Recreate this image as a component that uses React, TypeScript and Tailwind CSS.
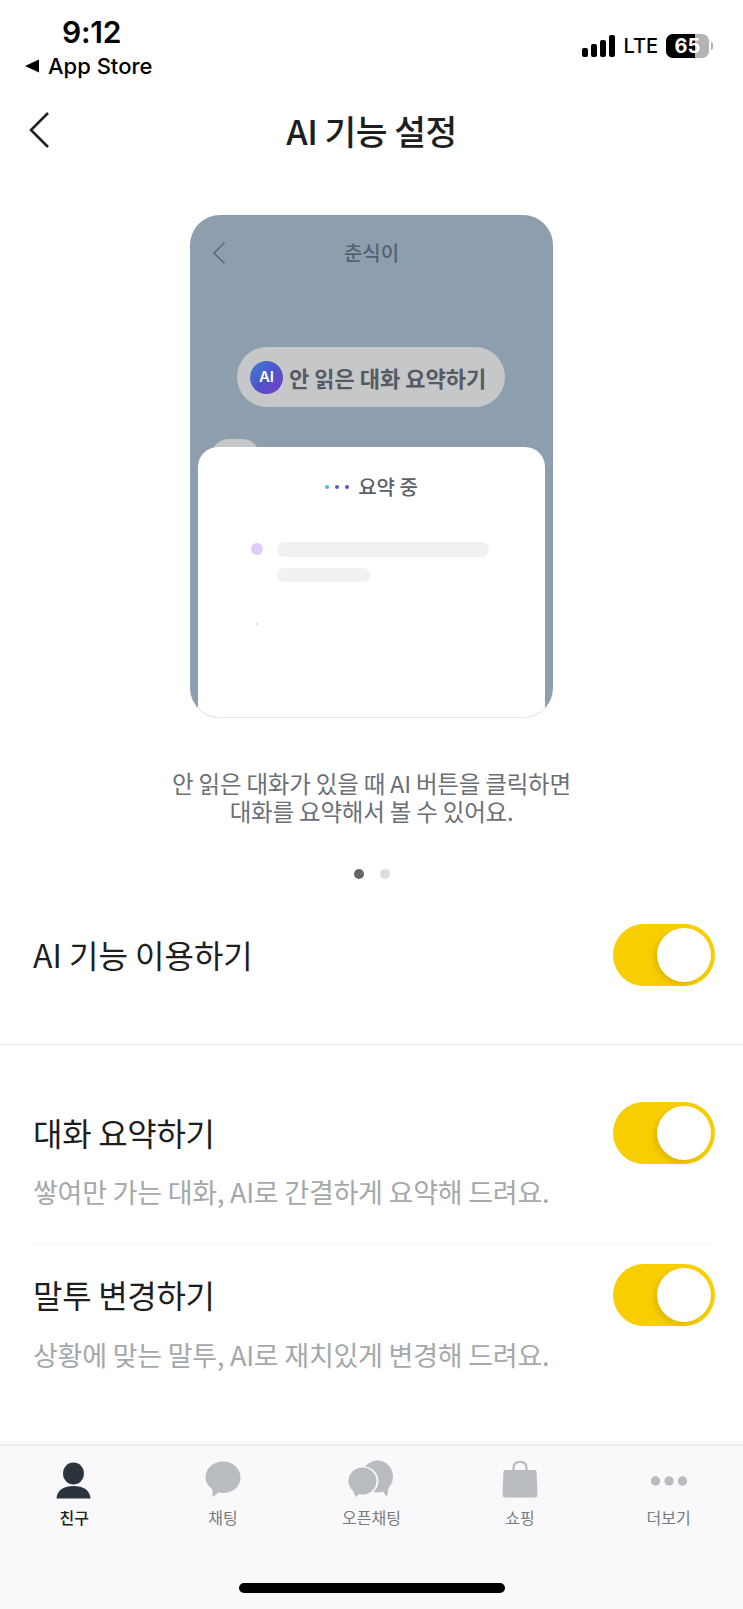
import React from 'react';

const cjk = "font-['Noto_Sans_CJK_KR','Noto_Sans',sans-serif]";

const Toggle: React.FC = () => (
  <div className="flex h-[62px] w-[102px] items-center justify-end rounded-full bg-[#f9ce00] pr-[4px]">
    <div className="h-[54px] w-[54px] rounded-full bg-white shadow-[-3px_3px_5px_rgba(150,120,0,0.25)]" />
  </div>
);

const FriendIcon = () => (
  <svg width="46" height="40" viewBox="0 0 46 40">
    <ellipse cx="22.5" cy="14.5" rx="10.5" ry="11" fill="#2b333d" />
    <path d="M5.500 39.500 C6 31 13 27 22.500 27 C32 27 39 31 39.500 39.500 Z" fill="#2b333d" />
  </svg>
);

const ChatIcon = () => (
  <svg width="46" height="40" viewBox="0 0 46 40">
    <path
      d="M23 2.500 C33 2.500 40.500 9.500 40.500 18.500 C40.500 27.500 33 34 23 34 C21.500 34 20 33.800 18.800 33.500 L12.500 38 L12.300 30 C8 27 5.500 23 5.500 18.500 C5.500 9.500 13 2.500 23 2.500 Z"
      fill="#b8bcbf"
    />
  </svg>
);

const OpenChatIcon = () => (
  <svg width="46" height="40" viewBox="0 0 46 40">
    <ellipse cx="29.500" cy="17.500" rx="15.500" ry="16" fill="#b8bcbf" />
    <path d="M33 30 L39 38 L41 26 Z" fill="#b8bcbf" />
    <ellipse cx="15" cy="22" rx="15.500" ry="14.500" fill="#f9f9fb" />
    <path d="M3 31 L7 40 L16 33 Z" fill="#f9f9fb" />
    <ellipse cx="14.500" cy="22" rx="14" ry="13.500" fill="#b8bcbf" />
    <path d="M4.500 30 L7.500 38 L14 33 Z" fill="#b8bcbf" />
  </svg>
);

const BagIcon = () => (
  <svg width="46" height="40" viewBox="0 0 46 40">
    <path d="M16.500 11 V9 C16.500 5 19 2.800 23 2.800 C27 2.800 29.500 5 29.500 9 V11" fill="none" stroke="#b8bcbf" strokeWidth="2.200" />
    <path d="M8 11 H38 C39 11 39.500 11.500 39.500 12.500 L40.500 36 C40.500 37.500 39.500 38.500 38 38.500 H8 C6.500 38.500 5.500 37.500 5.500 36 L6.500 12.500 C6.500 11.500 7 11 8 11 Z" fill="#b8bcbf" />
  </svg>
);

const MoreIcon = () => (
  <svg width="46" height="40" viewBox="0 0 46 40">
    <circle cx="9.500" cy="22" r="4.700" fill="#b8bcbf" />
    <circle cx="23" cy="22" r="4.700" fill="#b8bcbf" />
    <circle cx="36.500" cy="22" r="4.700" fill="#b8bcbf" />
  </svg>
);

const tabs = [
  { label: '친구', icon: <FriendIcon />, active: true },
  { label: '채팅', icon: <ChatIcon />, active: false },
  { label: '오픈채팅', icon: <OpenChatIcon />, active: false },
  { label: '쇼핑', icon: <BagIcon />, active: false },
  { label: '더보기', icon: <MoreIcon />, active: false },
];

const StatusBar = () => (
  <div className="flex h-[94px] items-start justify-between pl-[25px] pr-[30px]">
    <div className="flex flex-col font-['Inter',sans-serif] text-black">
      <div className="mt-[16px] ml-[37px] text-[30px] leading-[32px] font-semibold tracking-[-0.2px]">9:12</div>
      <div className="mt-[4px] flex items-center gap-[9px]">
        <svg width="14" height="14" viewBox="0 0 14 14">
          <path d="M0 7 L14 0.500 V13.500 Z" fill="#000" />
        </svg>
        <span className="text-[22px] leading-[28px] font-medium">App Store</span>
      </div>
    </div>
    <div className="mt-[34px] flex items-center font-['Inter',sans-serif] text-black">
      <div className="flex items-end gap-[3px]">
        <div className="h-[9px] w-[6px] rounded-[2px] bg-black" />
        <div className="h-[13px] w-[6px] rounded-[2px] bg-black" />
        <div className="h-[17px] w-[6px] rounded-[2px] bg-black" />
        <div className="h-[22px] w-[6px] rounded-[2px] bg-black" />
      </div>
      <span className="ml-[8px] text-[20px] leading-[24px] font-medium">LTE</span>
      <div className="relative ml-[8px] flex h-[24px] w-[43px] overflow-hidden rounded-[7px] bg-[#b4b4b4]">
        <div className="h-full w-[29px] bg-black" />
        <span className="absolute inset-0 text-center text-[20px] leading-[24px] font-bold text-white">65</span>
      </div>
      <div className="ml-[2px] h-[8px] w-[2px] rounded-r-full bg-[#b4b4b4]" />
    </div>
  </div>
);

const Header = () => (
  <div className="relative flex h-[72px] items-center justify-center">
    <svg className="absolute left-[28px] top-[17px]" width="24" height="38" viewBox="0 0 24 38">
      <path d="M20 2 L3 19 L20 36" fill="none" stroke="#222" strokeWidth="2.600" />
    </svg>
    <h1 className={`${cjk} text-[34.500px] leading-[44px] font-medium tracking-[-0.5px] text-[#1e1e1e]`}>AI 기능 설정</h1>
  </div>
);

const PreviewCard = () => (
  <div className={`${cjk} relative mx-auto mt-[49px] h-[503px] w-[363px] overflow-hidden rounded-[30px] bg-[#8d9fae]`}>
    <div className="relative flex h-[76px] items-center justify-center">
      <svg className="absolute left-[22px] top-[26px]" width="14" height="24" viewBox="0 0 14 24">
        <path d="M12.500 1.500 L2 12 L12.500 22.500" fill="none" stroke="#5c6875" strokeWidth="1.500" />
      </svg>
      <span className="text-[20px] leading-[28px] font-medium text-[#56626e]">춘식이</span>
    </div>
    <div className="mt-[56px] ml-[47px] flex h-[60px] w-[268px] items-center rounded-full bg-[#c6c7c9] pl-[13px]">
      <div className="flex h-[33px] w-[33px] items-center justify-center rounded-full bg-gradient-to-br from-[#3f7fd8] via-[#4a55c8] to-[#7a35c8] font-['Inter',sans-serif] text-[15px] font-semibold text-white">
        AI
      </div>
      <span className="ml-[6px] text-[22px] leading-[30px] font-semibold whitespace-nowrap text-[#555b63]">
        안 읽은 대화 요약하기
      </span>
    </div>
    <div className="mt-[32px] ml-[21px] h-[40px] w-[49px] rounded-[18px] bg-[#c6c7c9]" />

    {/* white sheet laid over the chat */}
    <div className="absolute inset-x-[8px] top-[232px] bottom-0 rounded-t-[20px] bg-white">
      <div className="mt-[26px] flex h-[28px] items-center justify-center">
        <div className="flex items-center gap-[6px]">
          <div className="h-[4px] w-[4px] rounded-full bg-[#55b8ee]" />
          <div className="h-[4px] w-[4px] rounded-full bg-[#4a5fd0]" />
          <div className="h-[4px] w-[4px] rounded-full bg-[#7a3fc8]" />
        </div>
        <span className="ml-[9px] text-[20px] leading-[28px] font-medium text-[#5a6068]">요약 중</span>
      </div>
      <div className="mt-[41px] flex pl-[53px]">
        <div className="mt-[1px] h-[12px] w-[12px] rounded-full bg-[#e0ccfb]" />
        <div className="ml-[14px] flex flex-col gap-[11px]">
          <div className="h-[15px] w-[212px] rounded-full bg-[#f1f1f1]" />
          <div className="h-[14px] w-[93px] rounded-full bg-[#f1f1f1]" />
        </div>
      </div>
      <div className="mt-[41px] ml-[58px] h-[2px] w-[2px] rounded-full bg-[#d8d8d8]" />
    </div>
    <div className="pointer-events-none absolute inset-0 rounded-[30px] border-b border-[#e3e5e7]" />
  </div>
);

export default function App() {
  return (
    <div className={`${cjk} flex h-[1609px] w-full flex-col overflow-hidden bg-white`}>
      <StatusBar />
      <Header />
      <PreviewCard />

      <p className="mt-[51px] text-center text-[23.500px] leading-[28px] tracking-[-0.2px] text-[#6b6f75]">
        안 읽은 대화가 있을 때 AI 버튼을 클릭하면
        <br />
        대화를 요약해서 볼 수 있어요.
      </p>

      <div className="mt-[44px] flex justify-center gap-[16px]">
        <div className="h-[10px] w-[10px] rounded-full bg-[#666666]" />
        <div className="h-[10px] w-[10px] rounded-full bg-[#dddddd]" />
      </div>

      <div className="mt-[45px] flex h-[62px] items-center justify-between pl-[33px] pr-[28px]">
        <span className="pb-[2px] text-[32px] leading-[42px] text-[#1e1e1e]">AI 기능 이용하기</span>
        <Toggle />
      </div>

      <div className="mt-[58px] h-px bg-[#ebebeb]" />

      <div className="mt-[57px] flex h-[62px] items-center justify-between pl-[33px] pr-[28px]">
        <span className="pb-[3px] text-[32px] leading-[42px] tracking-[-0.3px] text-[#1e1e1e]">대화 요약하기</span>
        <Toggle />
      </div>
      <p className="mt-[11px] pl-[33px] text-[27px] leading-[34px] tracking-[-0.23px] text-[#a5a8ab]">
        쌓여만 가는 대화, AI로 간결하게 요약해 드려요.
      </p>
      <div className="mx-[33px] mt-[34px] h-px bg-[#f5f5f5]" />

      <div className="mt-[20px] flex h-[62px] items-center justify-between pl-[33px] pr-[28px]">
        <span className="pb-[3px] text-[32px] leading-[42px] tracking-[-0.3px] text-[#1e1e1e]">말투 변경하기</span>
        <Toggle />
      </div>
      <p className="mt-[12px] pl-[33px] text-[27px] leading-[34px] tracking-[-0.23px] text-[#a5a8ab]">
        상황에 맞는 말투, AI로 재치있게 변경해 드려요.
      </p>

      <div className="mt-auto flex h-[167px] flex-col bg-white">
        <div className="h-px bg-[#f1f1f1]" />
        <div className="mt-px h-[2px] bg-[#ececec]" />
        <div className="flex flex-1 flex-col bg-[#f9f9fb]">
          <div className="mt-[13px] grid grid-cols-5">
            {tabs.map((t) => (
              <div key={t.label} className="flex flex-col items-center">
                {t.icon}
                <span className={`mt-[7px] text-[16px] leading-[22px] ${t.active ? 'font-medium text-[#222222]' : 'text-[#777b80]'}`}>
                  {t.label}
                </span>
              </div>
            ))}
          </div>
          <div className="mx-auto mt-[55px] h-[10px] w-[266px] rounded-full bg-black" />
        </div>
      </div>
    </div>
  );
}
